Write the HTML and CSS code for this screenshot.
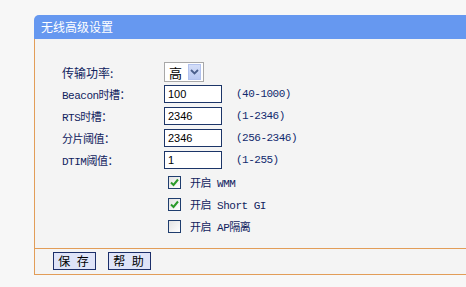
FILE: index.html
```html
<!DOCTYPE html>
<html lang="zh-CN">
<head>
  <meta charset="UTF-8" />
  <title>无线高级设置</title>
  <link rel="stylesheet" href="styles.css">
</head>
<body>
  <div class="panel">
    <div class="panel-title">无线高级设置</div>

    <div class="panel-body">
      <div class="form">
        <label class="lbl lbl-cn">传输功率:</label>
        <div class="select">
          <span class="select-val">高</span>
          <span class="select-btn">
            <svg width="9" height="6" viewBox="0 0 9 6"><path d="M1 1 L4.5 4.5 L8 1" fill="none" stroke="#4a5f8c" stroke-width="1.8"/></svg>
          </span>
        </div>
        <span></span>

        <label class="lbl">Beacon时槽：</label>
        <input class="txt" type="text" value="100">
        <span class="range">(40-1000)</span>

        <label class="lbl">RTS时槽：</label>
        <input class="txt" type="text" value="2346">
        <span class="range">(1-2346)</span>

        <label class="lbl">分片阈值：</label>
        <input class="txt" type="text" value="2346">
        <span class="range">(256-2346)</span>

        <label class="lbl">DTIM阈值：</label>
        <input class="txt" type="text" value="1">
        <span class="range">(1-255)</span>

        <div class="check-row">
          <span class="check"><svg width="11" height="11" viewBox="0 0 11 11"><path d="M2 5.5 L4.5 8 L9 2.5" fill="none" stroke="#2a9a2a" stroke-width="2"/></svg></span>
          <span class="check-txt">开启 WMM</span>
        </div>
        <div class="check-row">
          <span class="check"><svg width="11" height="11" viewBox="0 0 11 11"><path d="M2 5.5 L4.5 8 L9 2.5" fill="none" stroke="#2a9a2a" stroke-width="2"/></svg></span>
          <span class="check-txt">开启 Short GI</span>
        </div>
        <div class="check-row">
          <span class="check"></span>
          <span class="check-txt">开启 AP隔离</span>
        </div>
      </div>
    </div>

    <div class="panel-foot">
      <button class="btn">保 存</button>
      <button class="btn">帮 助</button>
    </div>
  </div>
</body>
</html>
```

FILE: styles.css
```css
body {
  margin: 0;
  background-color: #f7f7f7;
  font-family: "Noto Sans CJK SC", sans-serif;
  font-size: 12px;
  overflow: hidden;
}
.panel {
  margin: 15px 0 0 34px;
}
.panel-title {
  height: 24px;
  line-height: 24px;
  padding-left: 7px;
  background-color: #6698f0;
  color: #fff;
  font-size: 12px;
  border-radius: 5px 0 0 0;
}
.panel-body {
  border-left: 1px solid #e29d58;
  background-color: #f4f4f4;
  padding: 22px 0 11px 27px;
}
.form {
  display: grid;
  grid-template-columns: 102px 72px auto;
  grid-auto-rows: 22px;
  align-items: center;
}
.lbl {
  color: #10225e;
  font-family: "Liberation Mono", "Noto Sans CJK SC", monospace;
  font-size: 11px;
  letter-spacing: -0.5px;
}
.lbl-cn {
  font-family: "Noto Sans CJK SC", sans-serif;
  font-size: 12px;
  letter-spacing: 0;
}
.select {
  display: flex;
  align-items: center;
  justify-content: space-between;
  width: 40px;
  height: 20px;
  box-sizing: border-box;
  border: 1px solid #a8a8a8;
  background: #fff;
  padding: 0 2px 0 4px;
}
.select-val {
  font-size: 13px;
  color: #000;
}
.select-btn {
  display: flex;
  align-items: center;
  justify-content: center;
  width: 13px;
  height: 16px;
  background: linear-gradient(#d4def8, #b9c9f2);
  border: 1px solid #b2c2ee;
  box-sizing: border-box;
}
.txt {
  width: 58px;
  height: 18px;
  box-sizing: border-box;
  border: 1px solid #1c3568;
  background: #fff;
  margin: 0;
  padding: 0 3px;
  font-family: "Liberation Sans", sans-serif;
  font-size: 11px;
  color: #000;
}
.range {
  color: #122a6e;
  font-family: "Liberation Mono", monospace;
  font-size: 11px;
  letter-spacing: -0.5px;
}
.check-row {
  grid-column: 2 / -1;
  display: flex;
  align-items: center;
  padding-left: 4px;
}
.check {
  display: flex;
  align-items: center;
  justify-content: center;
  width: 13px;
  height: 13px;
  box-sizing: border-box;
  border: 1px solid #1f3d6e;
  background: linear-gradient(135deg, #e2e2e2, #fff);
  margin-right: 9px;
}
.check-txt {
  color: #10225e;
  font-family: "Liberation Mono", "Noto Sans CJK SC", monospace;
  font-size: 11px;
  letter-spacing: -0.5px;
}
.panel-foot {
  border-left: 1px solid #e29d58;
  border-top: 1px solid #e29d58;
  border-bottom: 1px solid #e29d58;
  background-color: #f4f4f4;
  height: 27px;
  padding: 3px 0 0 18px;
  box-sizing: border-box;
  display: flex;
  gap: 12px;
  align-items: flex-start;
}
.btn {
  width: 43px;
  height: 18px;
  padding: 0;
  border: 1px solid #1c2f6a;
  background-color: #dfe4f8;
  font-family: "Noto Sans CJK SC", sans-serif;
  font-size: 12px;
  line-height: 14px;
  color: #000;
  letter-spacing: 2px;
}
```
